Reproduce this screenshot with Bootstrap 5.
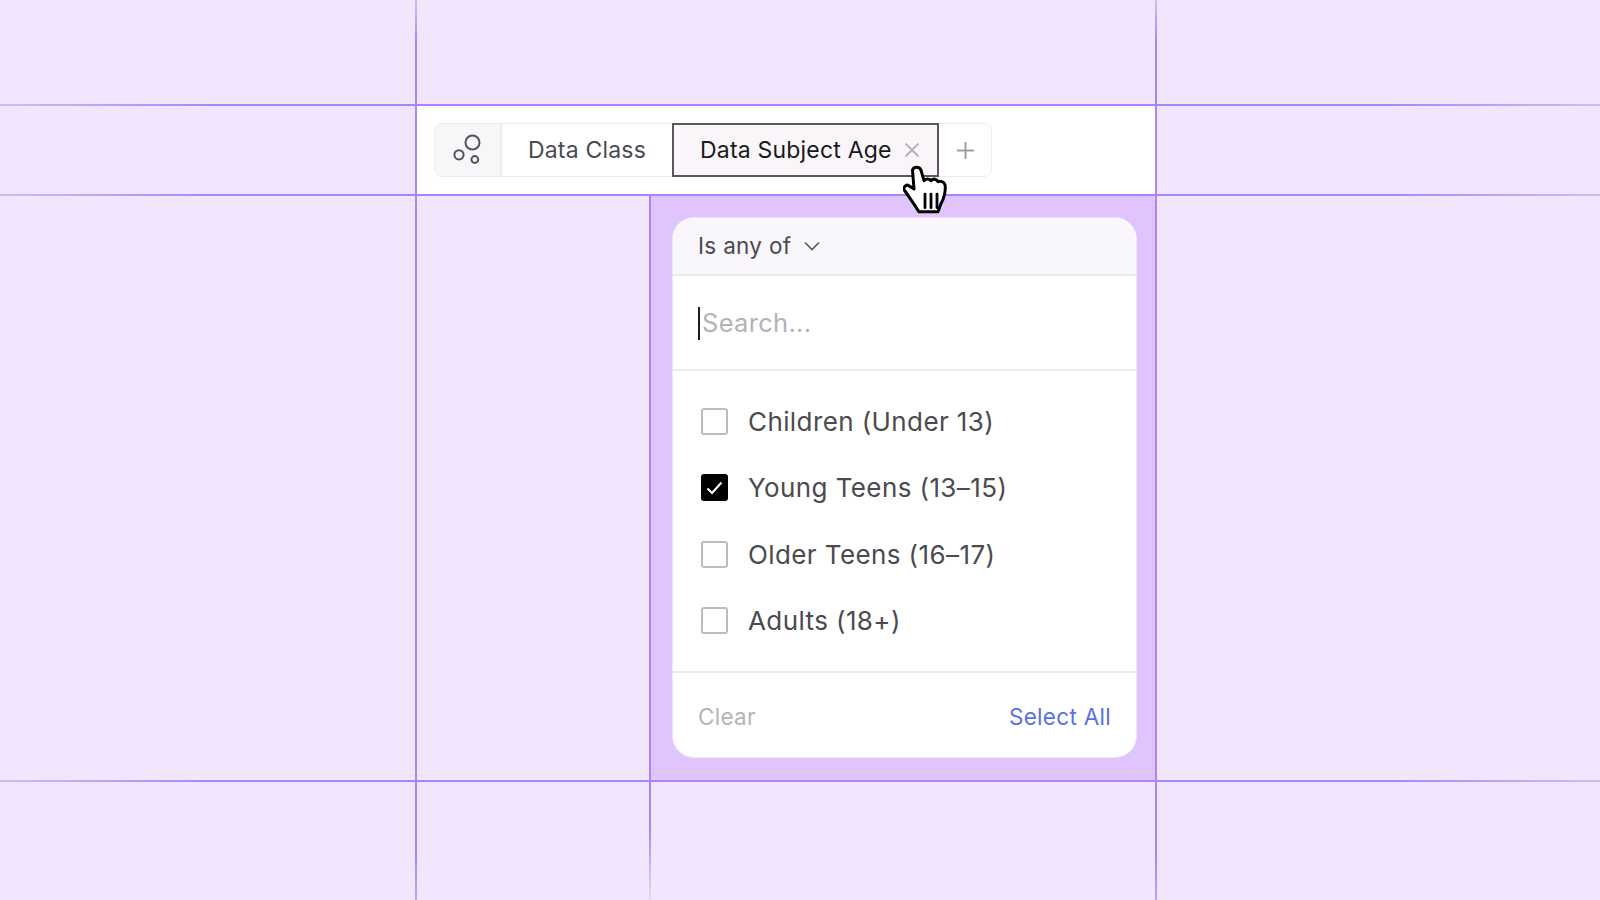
<!DOCTYPE html>
<html lang="en">
<head>
    <meta charset="UTF-8">
    <title>Filter</title>
    <link href="https://cdn.jsdelivr.net/npm/bootstrap@5.3.0/dist/css/bootstrap.min.css" rel="stylesheet">
    <style>
        body { background: #f2e6ff; font-family: Inter, "Liberation Sans", sans-serif; color: #4b4a50; overflow: hidden; }
        .board { display: grid; grid-template-columns: 417px 234px 506px 1fr; grid-template-rows: 106px 90px 586px 118px; width: 1600px; height: 900px; position: relative; }
        .cell { border-color: #ab83fb; border-style: solid; border-width: 0 2px 2px 0; position: relative; }
        .cell-wide { grid-column: 2 / 4; }
        .cell-end { border-right-width: 0; }
        .cell-low { border-bottom-width: 0; }
        /* the lines fade out towards the page edges */
        .fade-edge { position: absolute; pointer-events: none; }
        .fade-left { left: 0; top: 0; bottom: 0; width: 220px; background: linear-gradient(to right, rgba(242,230,255,.55), rgba(242,230,255,0)); }
        .fade-right { right: 0; top: 0; bottom: 0; width: 220px; background: linear-gradient(to left, rgba(242,230,255,.55), rgba(242,230,255,0)); }
        .fade-top { left: 0; right: 0; top: 0; height: 40px; background: linear-gradient(to bottom, rgba(242,230,255,.6), rgba(242,230,255,0)); }
        .fade-bottom { left: 0; right: 0; bottom: 0; height: 45px; background: linear-gradient(to top, rgba(242,230,255,.3), rgba(242,230,255,0)); }
        .fade-mid { right: -2px; bottom: 0; width: 6px; height: 75px; background: linear-gradient(to top, rgba(242,230,255,.75), rgba(242,230,255,0)); }
        .toolbar { background: #fff; padding: 17px 0 0 17px; }
        .pill { display: inline-flex; height: 54px; border: 1px solid #eeecef; border-radius: 8px; font-size: 23px; letter-spacing: .2px; }
        .pill-icon { width: 67px; padding-left: 1px; background: #f8f6f9; border-right: 2px solid #eeecef; border-radius: 8px 0 0 8px; }
        .pill-item { width: 170px; }
        .pill-active { width: 267px; margin: -1px 0; height: 54px; background: #f9f5f9; border: 2px solid #5a585e; color: #19181c; padding: 0 17px 0 26px; }
        .pill-add { width: 52px; }
        .panel-cell { background: #dfc4fe; padding: 21px 18px 22px 21px; }
        .panel { height: 541px; background: #fff; border: 1px solid #ebe9ee; border-radius: 22px; overflow: hidden; }
        .panel-head { height: 58px; background: #f9f7fb; border-bottom: 2px solid #ebe9ee; padding: 0 25px; font-size: 22.5px; letter-spacing: .3px; gap: 13px; }
        .panel-search { height: 95px; border-bottom: 2px solid #ebe9ee; padding: 1px 25px 0; font-size: 25.5px; letter-spacing: .3px; color: #b4b1b9; }
        .caret-bar { width: 2px; height: 33px; background: #1a1a1a; margin-right: 2px; }
        .options { height: 300px; padding: 17px 28px 0; font-size: 26px; letter-spacing: .4px; }
        .option { height: 66.5px; gap: 20px; }
        .tick { width: 27px; height: 27px; border: 2px solid #bdbbc1; border-radius: 3px; background: #fff; }
        .tick-on { background: #000; border-color: #000; }
        .panel-foot { height: 85px; padding: 5px 25px 0; font-size: 22.5px; letter-spacing: .3px; border-top: 2px solid #ebe9ee; }
        .foot-clear { color: #b5b2ba; }
        .foot-all { color: #5b70e2; }
        .hand { position: absolute; left: 903px; top: 165px; width: 48px; height: 52px; }
    </style>
</head>
<body>
    <div class="board">
        <div class="cell"></div>
        <div class="cell cell-wide"></div>
        <div class="cell cell-end"></div>

        <div class="cell"></div>
        <div class="cell cell-wide toolbar">
            <div class="pill">
                <div class="pill-icon d-flex align-items-center justify-content-center">
                    <svg width="30" height="32" viewBox="0 0 30 32" fill="none" stroke="#55535a" stroke-width="2">
                        <circle cx="19.5" cy="8.5" r="7"/>
                        <circle cx="6" cy="20.8" r="4.6"/>
                        <circle cx="21.8" cy="25.5" r="3.4"/>
                    </svg>
                </div>
                <div class="pill-item d-flex align-items-center justify-content-center">Data Class</div>
                <div class="pill-active d-flex align-items-center justify-content-between">
                    <span>Data Subject Age</span>
                    <svg width="16" height="16" viewBox="0 0 16 16" stroke="#b4b2b8" stroke-width="1.8"><path d="M1.5 1.5l13 13M14.5 1.5l-13 13"/></svg>
                </div>
                <div class="pill-add d-flex align-items-center justify-content-center">
                    <svg width="19" height="19" viewBox="0 0 19 19" stroke="#a09ea5" stroke-width="2"><path d="M9.5 1v17M1 9.5h17"/></svg>
                </div>
            </div>
        </div>
        <div class="cell cell-end"></div>

        <div class="cell"></div>
        <div class="cell"></div>
        <div class="cell panel-cell">
            <div class="panel d-flex flex-column">
                <div class="panel-head d-flex align-items-center">
                    <span>Is any of</span>
                    <svg width="16" height="10" viewBox="0 0 16 10" fill="none" stroke="#5a585e" stroke-width="1.6"><path d="M1 1.5l7 7 7-7"/></svg>
                </div>
                <div class="panel-search d-flex align-items-center">
                    <span class="caret-bar"></span><span>Search...</span>
                </div>
                <div class="options">
                    <div class="option d-flex align-items-center"><span class="tick"></span><span>Children (Under 13)</span></div>
                    <div class="option d-flex align-items-center">
                        <span class="tick tick-on d-flex align-items-center justify-content-center">
                            <svg width="17" height="14" viewBox="0 0 17 14" fill="none" stroke="#fff" stroke-width="2"><path d="M1.5 7.5l4.5 4.5 9.5-10.5"/></svg>
                        </span>
                        <span>Young Teens (13–15)</span>
                    </div>
                    <div class="option d-flex align-items-center"><span class="tick"></span><span>Older Teens (16–17)</span></div>
                    <div class="option d-flex align-items-center"><span class="tick"></span><span>Adults (18+)</span></div>
                </div>
                <div class="panel-foot d-flex align-items-center justify-content-between">
                    <span class="foot-clear">Clear</span>
                    <span class="foot-all">Select All</span>
                </div>
            </div>
        </div>
        <div class="cell cell-end"></div>

        <div class="cell cell-low"></div>
        <div class="cell cell-low"><div class="fade-edge fade-mid"></div></div>
        <div class="cell cell-low"></div>
        <div class="cell cell-low cell-end"></div>

        <div class="fade-edge fade-left"></div>
        <div class="fade-edge fade-right"></div>
        <div class="fade-edge fade-top"></div>
        <div class="fade-edge fade-bottom"></div>

        <svg class="hand" viewBox="0 0 48 50" preserveAspectRatio="none" stroke-linejoin="round" stroke-linecap="round">
            <path d="M9.5 5c1-3.5 7-4 8.500 0L21 15c2-2 5-2 7 0 2-2 5-2 7 1 2-1 6 0 7 3 1 5-1 14-4 18l-3 8H16l-4-6L2 25c-3-3 1-7 4-5l5 3z" fill="#fff" stroke="#000" stroke-width="3"/>
            <path d="M22 28v13M28 28v13M34 28v13" stroke="#000" stroke-width="2.8" fill="none"/>
        </svg>
    </div>
</body>
</html>
